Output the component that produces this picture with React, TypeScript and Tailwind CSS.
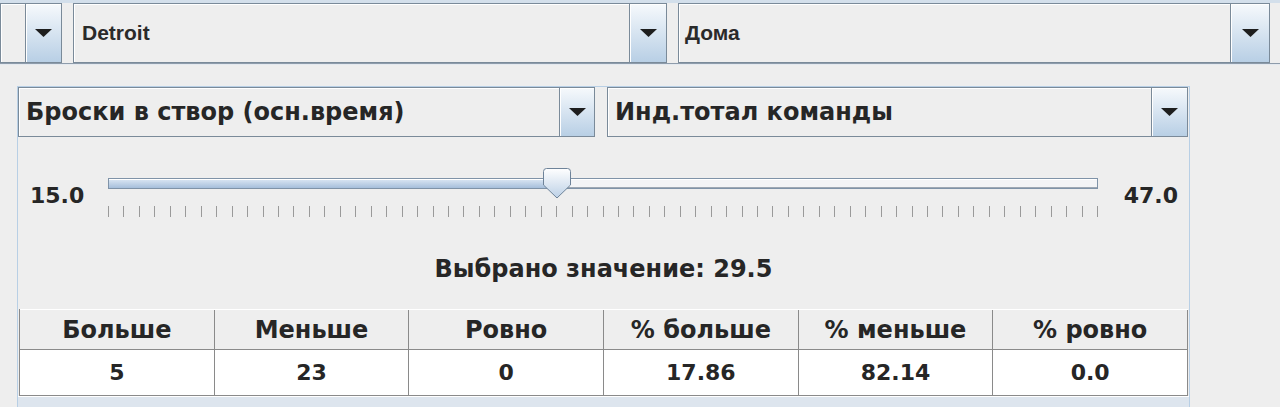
import React from "react";

const big = "font-['DejaVu_Sans','Liberation_Sans',sans-serif] font-bold text-[#262626]";

function Arrow() {
  return (
    <svg width="17" height="8" viewBox="0 0 17 8">
      <polygon points="0,0 17,0 8.5,8" fill="#1e1e1e" />
    </svg>
  );
}

function ArrowButton({ width }: { width: string }) {
  return (
    <div
      className={`flex ${width} shrink-0 items-center justify-center border border-[#7a8a99] bg-gradient-to-b from-[#f6f9fc] to-[#b8cfe5] shadow-[inset_1px_1px_0_#ffffff]`}
    >
      <Arrow />
    </div>
  );
}

interface ComboProps {
  text?: string;
  className?: string;
  textClass?: string;
  arrowWidth?: string;
  pad?: string;
}

function Combo({ text, className, textClass, arrowWidth = "w-[38px]", pad = "pl-[7px]" }: ComboProps) {
  return (
    <div className={`flex ${className}`}>
      <div
        className={`flex min-w-0 flex-1 items-center border border-r-0 border-[#7a8a99] bg-[#eeeeee] shadow-[inset_1px_1px_0_#ffffff] ${pad}`}
      >
        <span className={textClass}>{text}</span>
      </div>
      <ArrowButton width={arrowWidth} />
    </div>
  );
}

const columns = ["Больше", "Меньше", "Ровно", "% больше", "% меньше", "% ровно"];
const values = ["5", "23", "0", "17.86", "82.14", "0.0"];

export default function App() {
  const min = 15;
  const max = 47;
  const value = 29.5;
  const pct = ((value - min) / (max - min)) * 100;
  const ticks = Array.from({ length: 65 }, (_, i) => i);

  return (
    <div className="h-[407px] w-[1280px] overflow-hidden bg-[#eeeeee]">
      {/* top selectors */}
      <div className="h-[3px] bg-[#d3dfeb]" />
      <div className="flex h-[60px] gap-[11px] pr-[10px]">
        <Combo className="w-[62px]" arrowWidth="w-[37px]" />
        <Combo
          className="w-[594px]"
          text="Detroit"
          pad="pl-[8px]"
          textClass="font-['Liberation_Sans',Arial,sans-serif] text-[21px] font-bold text-[#2a2a2a]"
        />
        <Combo
          className="flex-1"
          text="Дома"
          pad="pl-[6px]"
          arrowWidth="w-[40px]"
          textClass="font-['Liberation_Sans',Arial,sans-serif] text-[21px] font-bold text-[#2a2a2a]"
        />
      </div>
      <div className="h-[2px] border-t border-[#8e9cab] bg-[#e4e9ef]" />

      {/* main panel */}
      <div className="ml-[17px] mt-[21px] w-[1173px] border-x border-t border-[#b8cfe5]">
        <div className="flex h-[50px] gap-[12px] pr-[1px]">
          <Combo
            className="w-[577px]"
            text="Броски в створ (осн.время)"
            arrowWidth="w-[36px]"
            textClass={`${big} text-[24px]`}
          />
          <Combo
            className="flex-1"
            text="Инд.тотал команды"
            arrowWidth="w-[37px]"
            textClass={`${big} text-[24px]`}
          />
        </div>

        {/* slider */}
        <div className="mt-[31px] flex h-[50px] items-center pl-[12px] pr-[11px]">
          <div className={`${big} w-[78px] pt-[4px] text-[22px]`}>15.0</div>
          <div className="relative h-[50px] flex-1">
            <div className="mt-[10px] flex h-[11px] border border-[#7f93a8]">
              <div
                className="h-full border-t border-white bg-gradient-to-b from-[#d6e3f1] to-[#a6bfdb]"
                style={{ width: `${pct}%` }}
              />
              <div className="h-full flex-1 border-t border-white bg-[#f3f4f6] shadow-[inset_0_-1px_0_#9ea8b3]" />
            </div>
            <div className="mt-[17px] flex h-[11px] justify-between">
              {ticks.map((t) => (
                <div key={t} className="h-full w-px bg-[#9a9a9a]" />
              ))}
            </div>
            <svg
              className="absolute top-0"
              style={{ left: `calc(${pct}% - 14px)` }}
              width="28"
              height="31"
              viewBox="0 0 28 31"
            >
              <defs>
                <linearGradient id="thumb" x1="0" y1="0" x2="0" y2="1">
                  <stop offset="0" stopColor="#ffffff" />
                  <stop offset="1" stopColor="#bcd0e6" />
                </linearGradient>
              </defs>
              <path
                d="M3.5 0.5 H24.5 Q27.5 0.5 27.5 3.5 V17 L14 30 L0.5 17 V3.5 Q0.5 0.5 3.5 0.5 Z"
                fill="url(#thumb)"
                stroke="#6e8399"
                strokeWidth="1"
              />
            </svg>
          </div>
          <div className={`${big} w-[80px] pt-[4px] text-right text-[22px]`}>47.0</div>
        </div>

        <div className={`${big} mt-[37px] h-[28px] text-center text-[24px] leading-[28px]`}>
          Выбрано значение: 29.5
        </div>

        {/* results table */}
        <div className="mx-[1px] mt-[26px] border-l border-[#8a8a8a]">
          <div className="grid h-[41px] grid-cols-6 border-b border-t border-b-[#8a8a8a] border-t-white bg-[#eeeeee]">
            {columns.map((c) => (
              <div
                key={c}
                className={`${big} flex items-center justify-center border-r border-[#8a8a8a] text-[24px]`}
              >
                {c}
              </div>
            ))}
          </div>
          <div className="grid h-[46px] grid-cols-6 border-b border-[#8a8a8a] bg-white">
            {values.map((v, i) => (
              <div
                key={i}
                className={`${big} flex items-center justify-center border-r border-[#8a8a8a] text-[22px]`}
              >
                {v}
              </div>
            ))}
          </div>
        </div>
        <div className="h-[12px] border-t border-white bg-[#dde5ee]" />
      </div>
    </div>
  );
}
